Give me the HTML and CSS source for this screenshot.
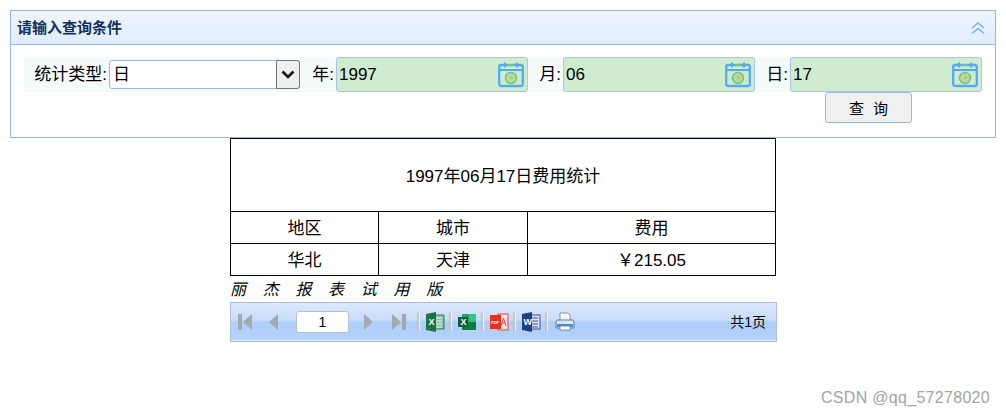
FILE: index.html
```html
<!DOCTYPE html>
<html lang="en">
<head>
    <meta charset="UTF-8">
    <title>费用统计</title>
    <link rel="stylesheet" href="styles.css">
</head>
<body>
    <div class="panel">
        <div class="panel-title">
            <span>请输入查询条件</span>
            <svg class="collapse" width="16" height="14" viewBox="0 0 16 14" fill="none" stroke="#6fb5f5" stroke-width="1.6"><path d="M2 7l6-5 6 5M2 12.5l6-5 6 5"/></svg>
        </div>
        <div class="panel-body">
            <div class="filter-row">
                <label class="type-label">统计类型:</label>
                <div class="select">
                    <span>日</span>
                    <span class="select-arrow"><svg width="14" height="9" viewBox="0 0 14 9" fill="none" stroke="#111" stroke-width="2.6"><path d="M1.5 1.5L7 7l5.5-5.5"/></svg></span>
                </div>
                <label>年:</label>
                <div class="date-input"><span>1997</span><svg class="cal" width="26" height="27" viewBox="0 0 26 27"><use href="#cal"/></svg></div>
                <label>月:</label>
                <div class="date-input"><span>06</span><svg class="cal" width="26" height="27" viewBox="0 0 26 27"><use href="#cal"/></svg></div>
                <label>日:</label>
                <div class="date-input"><span>17</span><svg class="cal" width="26" height="27" viewBox="0 0 26 27"><use href="#cal"/></svg></div>
            </div>
            <div class="button-row">
                <button class="query-btn">查 询</button>
            </div>
        </div>
    </div>

    <div class="report">
        <table class="report-table">
            <colgroup><col class="col-a"><col class="col-b"><col></colgroup>
            <tr class="title-row"><td colspan="3"><span>1997年06月17日费用统计</span></td></tr>
            <tr><td><span>地区</span></td><td><span>城市</span></td><td><span>费用</span></td></tr>
            <tr><td><span>华北</span></td><td><span>天津</span></td><td><span>￥215.05</span></td></tr>
        </table>
        <div class="trial-note">丽杰报表试用版</div>
        <div class="toolbar">
            <svg class="nav first" width="14" height="18" viewBox="0 0 14 18"><rect x="0" y="1" width="4" height="16" fill="#a3a9ae"/><path d="M14 1v16L5 9z" fill="#a3a9ae"/></svg>
            <svg class="nav prev" width="11" height="16" viewBox="0 0 11 16"><path d="M10 0v16L1 8z" fill="#a3a9ae"/></svg>
            <div class="page-input">1</div>
            <svg class="nav next" width="11" height="16" viewBox="0 0 11 16"><path d="M1 0v16l9-8z" fill="#a3a9ae"/></svg>
            <svg class="nav last" width="14" height="18" viewBox="0 0 14 18"><path d="M0 1v16l9-8z" fill="#a3a9ae"/><rect x="10" y="1" width="4" height="16" fill="#a3a9ae"/></svg>
            <i class="sep first-sep"></i>
            <svg class="tool" width="20" height="20" viewBox="0 0 20 20"><rect x="9" y="3" width="10" height="14" fill="#8fc2ae" stroke="#2a7a58"/><path d="M11 6h6M11 9h6M11 12h6M11 15h6" stroke="#e8f4ee"/><path d="M1 2l10-2v20L1 18z" fill="#1d7248"/><text x="3.5" y="13" class="glyph">X</text></svg>
            <i class="sep"></i>
            <svg class="tool" width="20" height="20" viewBox="0 0 20 20"><rect x="5" y="2" width="14" height="16" rx="1" fill="#21a366"/><path d="M5 10h14v8H5z" fill="#107c41"/><path d="M12 2h7v8h-7z" fill="#33c481"/><rect x="1" y="5" width="10" height="10" fill="#185c37"/><text x="3.4" y="13" class="glyph">X</text></svg>
            <i class="sep"></i>
            <svg class="tool" width="20" height="20" viewBox="0 0 20 20"><rect x="9" y="2" width="10" height="16" fill="#fbe3dd" stroke="#e2483a"/><path d="M12 14l2.500-8 2.500 8M13 11h3" stroke="#e2483a" fill="none"/><rect x="1" y="3" width="11" height="14" fill="#e8301f"/><text x="2" y="12" class="glyph small">PDF</text></svg>
            <i class="sep"></i>
            <svg class="tool" width="20" height="20" viewBox="0 0 20 20"><rect x="9" y="3" width="10" height="14" fill="#dbe3f2" stroke="#3c558f"/><path d="M11 6h6M11 9h6M11 12h6M11 15h6" stroke="#3c558f"/><path d="M1 2l10-2v20L1 18z" fill="#223f86"/><text x="2.500" y="13" class="glyph">W</text></svg>
            <i class="sep"></i>
            <svg class="tool printer" width="20" height="20" viewBox="0 0 20 20"><path d="M5 1h8l2 2v6H5z" fill="#f4f6f8" stroke="#8a97a6"/><path d="M2 8h16l1 2v6H1v-6z" fill="#dfe6ee" stroke="#5f7f9f"/><rect x="2" y="12" width="16" height="3" fill="#3f8fc8"/><rect x="5" y="14" width="10" height="4" fill="#fff" stroke="#7d8ea0"/></svg>
            <span class="page-total">共1页</span>
        </div>
    </div>

    <div class="watermark">CSDN @qq_57278020</div>

    <svg class="defs" width="0" height="0">
        <symbol id="cal" viewBox="0 0 26 27">
            <rect x="1.200" y="4" width="23.600" height="21" rx="2" fill="none" stroke="#55aaf2" stroke-width="2.300"/>
            <path d="M1 9h24" stroke="#55aaf2" stroke-width="2"/>
            <path d="M7 1.500v5M19 1.500v5" stroke="#55aaf2" stroke-width="2"/>
            <path d="M10 4h6" stroke="#6fc48c" stroke-width="2"/>
            <circle cx="13" cy="17" r="5.500" fill="#b7dca0" stroke="#6fc48c" stroke-width="1.500"/>
            <path d="M13 14.500V17h2.500" fill="none" stroke="#e5a34a" stroke-width="1.200"/>
        </symbol>
    </svg>
</body>
</html>
```
FILE: styles.css
```css
body {
    margin: 0;
    padding: 10px 0 0;
    height: 406px;
    position: relative;
    overflow: hidden;
    background: #fff;
    color: #000;
    font-family: "Liberation Sans", "Noto Sans CJK SC", sans-serif;
    font-size: 17px;
}
.panel {
    margin: 0 10px;
    height: 128px;
    box-sizing: border-box;
    border: 1px solid #95b8e7;
}
.panel-title {
    height: 34px;
    box-sizing: border-box;
    display: flex;
    align-items: center;
    justify-content: space-between;
    padding: 0 9px 0 6px;
    background: linear-gradient(#eff5ff, #e0ecff);
    border-bottom: 1px solid #95b8e7;
    color: #15305a;
    font-size: 15px;
    font-weight: bold;
}
.panel-title span {
    margin-top: -2px;
}
.panel-body {
    padding: 12px 13px 0;
}
.filter-row {
    display: grid;
    grid-template-columns: 85px 191px 36px 192px 35px 192px 35px 192px;
    height: 35px;
    align-items: center;
    background: #f5fafa;
}
.filter-row label {
    text-align: right;
    padding-right: 2px;
    line-height: 29px;
}
.select {
    height: 29px;
    box-sizing: border-box;
    display: flex;
    justify-content: space-between;
    padding-left: 3px;
    line-height: 27px;
    background: #fff;
    border: 1px solid #95b8e7;
    border-radius: 3px;
}
.select-arrow {
    width: 22px;
    display: flex;
    align-items: center;
    justify-content: center;
    background: #efefef;
    border: 1px solid #767676;
    border-radius: 0 3px 3px 0;
    margin: -1px -1px -1px 0;
}
.date-input {
    height: 35px;
    box-sizing: border-box;
    display: flex;
    align-items: center;
    justify-content: space-between;
    padding: 0 3px 0 2px;
    background: #d0eccf;
    border: 1px solid #a9c6e8;
    border-radius: 3px;
}
.cal {
    margin-top: -1px;
}
.button-row {
    display: flex;
    justify-content: flex-end;
    padding-right: 70px;
}
.query-btn {
    width: 87px;
    height: 31px;
    padding: 0;
    background: #f0f0f0;
    border: 1px solid #95b8e7;
    border-radius: 3px;
    font-family: inherit;
    font-size: 15px;
    word-spacing: 5px;
}
.report {
    width: 546px;
    margin: 0 auto;
}
.report-table {
    width: 546px;
    border-collapse: collapse;
    table-layout: fixed;
    text-align: center;
}
.report-table td {
    border: 1px solid #000;
    height: 31px;
    padding: 0;
}
.report-table .title-row td {
    height: 72px;
}
.report-table span {
    display: block;
    margin-top: -2px;
}
.col-a {
    width: 148px;
}
.col-b {
    width: 149px;
}
.trial-note {
    height: 26px;
    line-height: 28px;
    font-style: italic;
    font-size: 16px;
    letter-spacing: 16.7px;
    white-space: nowrap;
}
.toolbar {
    width: 547px;
    height: 40px;
    box-sizing: border-box;
    display: flex;
    align-items: center;
    padding-left: 7px;
    background: linear-gradient(#dce9fd 0, #c8dcfa 45%, #aecffa 50%, #b2d2fb 95%, #e4effd 100%);
    border: 1px solid #a9c0d8;
}
.nav {
    flex: none;
}
.prev {
    margin-left: 16px;
}
.page-input {
    width: 53px;
    height: 22px;
    box-sizing: border-box;
    margin-left: 17px;
    background: #fff;
    border: 1px solid #b4c0cc;
    border-radius: 3px;
    font-size: 14px;
    line-height: 20px;
    text-align: center;
}
.next {
    margin-left: 14px;
}
.last {
    margin-left: 18px;
}
.sep {
    width: 2px;
    height: 18px;
    margin: 0 6px 0 4px;
    background: #c9c2ac;
    box-shadow: 1px 0 0 #eef4fd;
}
.first-sep {
    margin-left: 11px;
}
.tool {
    flex: none;
    width: 20px;
}
.printer {
    margin-left: 2px;
}
.glyph {
    fill: #fff;
    font-size: 9px;
    font-weight: bold;
}
.glyph.small {
    font-size: 4px;
}
.page-total {
    margin-left: auto;
    margin-right: 10px;
    margin-top: -3px;
    font-size: 14px;
}
.watermark {
    position: absolute;
    right: 16px;
    bottom: 9px;
    color: #a3a3a3;
    font-size: 16px;
    letter-spacing: 0.3px;
}
.defs {
    position: absolute;
}
```
